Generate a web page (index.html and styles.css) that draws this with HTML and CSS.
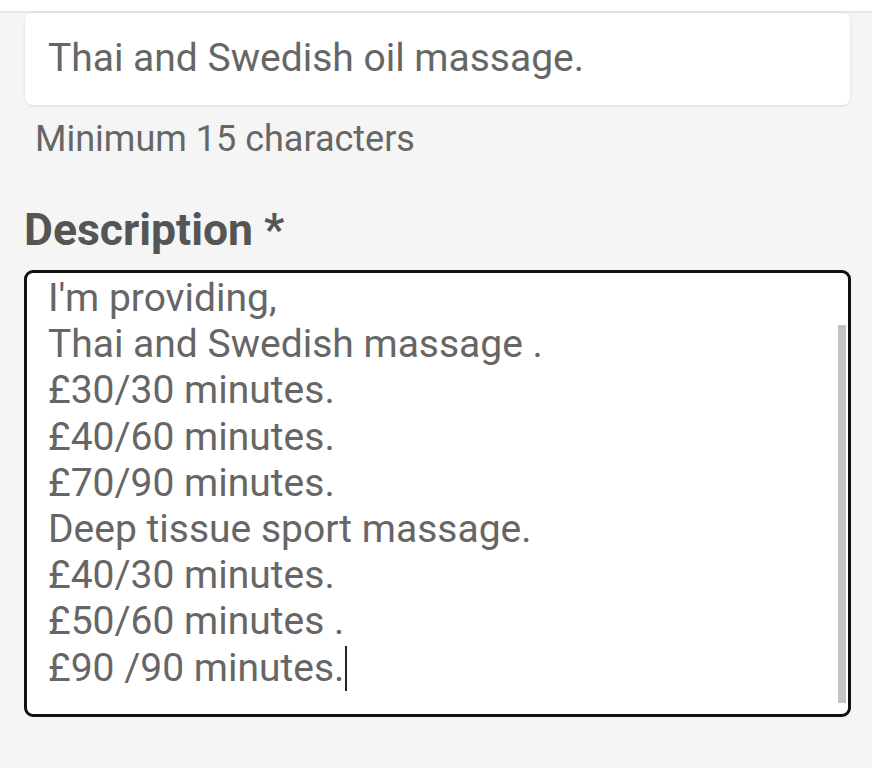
FILE: index.html
```html
<!DOCTYPE html>
<html>
<head>
<meta charset="utf-8">
<link rel="stylesheet" href="styles.css">
</head>
<body>
<div class="topbar"></div>
<main class="form">
  <div class="input-card">Thai and Swedish oil massage.</div>
  <div class="hint">Minimum 15 characters</div>
  <h2 class="label">Description *</h2>
  <div class="textarea">
    <div class="lines">
      <div>I'm providing,</div>
      <div>Thai and Swedish massage .</div>
      <div>£30/30 minutes.</div>
      <div>£40/60 minutes.</div>
      <div>£70/90 minutes.</div>
      <div>Deep tissue sport massage.</div>
      <div>£40/30 minutes.</div>
      <div>£50/60 minutes .</div>
      <div>£90 /90 minutes.<span class="caret"></span></div>
    </div>
    <div class="scrollbar"></div>
  </div>
</main>
</body>
</html>
```
FILE: styles.css
```css
html, body {
  margin: 0;
  padding: 0;
}
body {
  background: #f5f5f5;
  font-family: Roboto, "Noto Sans", sans-serif;
  width: 872px;
  height: 768px;
  overflow: hidden;
}
.topbar {
  height: 11px;
  background: #fff;
  border-bottom: 2px solid #e4e4ea;
}
.form {
  padding: 0 21px 0 24px;
  display: flex;
  flex-direction: column;
}
.input-card {
  margin-left: 1px;
  margin-right: 1px;
  height: 92px;
  background: #fff;
  border-radius: 7px;
  box-shadow: 0 1px 3px rgba(0,0,0,0.12);
  color: #666;
  font-size: 39px;
  line-height: 90px;
  padding-left: 23px;
}
.hint {
  color: #666;
  font-size: 36px;
  margin-top: 14px;
  padding-left: 11px;
  line-height: 40px;
}
.label {
  margin: 46px 0 0 0;
  color: #555;
  font-size: 44.5px;
  font-weight: 700;
  line-height: 50px;
}
.textarea {
  position: relative;
  margin-top: 15px;
  height: 447px;
  box-sizing: border-box;
  background: #fff;
  border: 3px solid #111;
  border-radius: 9px;
  overflow: hidden;
}
.lines {
  margin-top: 2px;
  padding-left: 21px;
  color: #666;
  font-size: 39px;
  line-height: 46.2px;
}
.caret {
  display: inline-block;
  width: 2px;
  height: 45px;
  background: #222;
  vertical-align: -10px;
  margin-left: 1px;
}
.scrollbar {
  position: absolute;
  right: 2px;
  top: 52px;
  width: 8px;
  height: 378px;
  background: #c4c4c4;
}
```
